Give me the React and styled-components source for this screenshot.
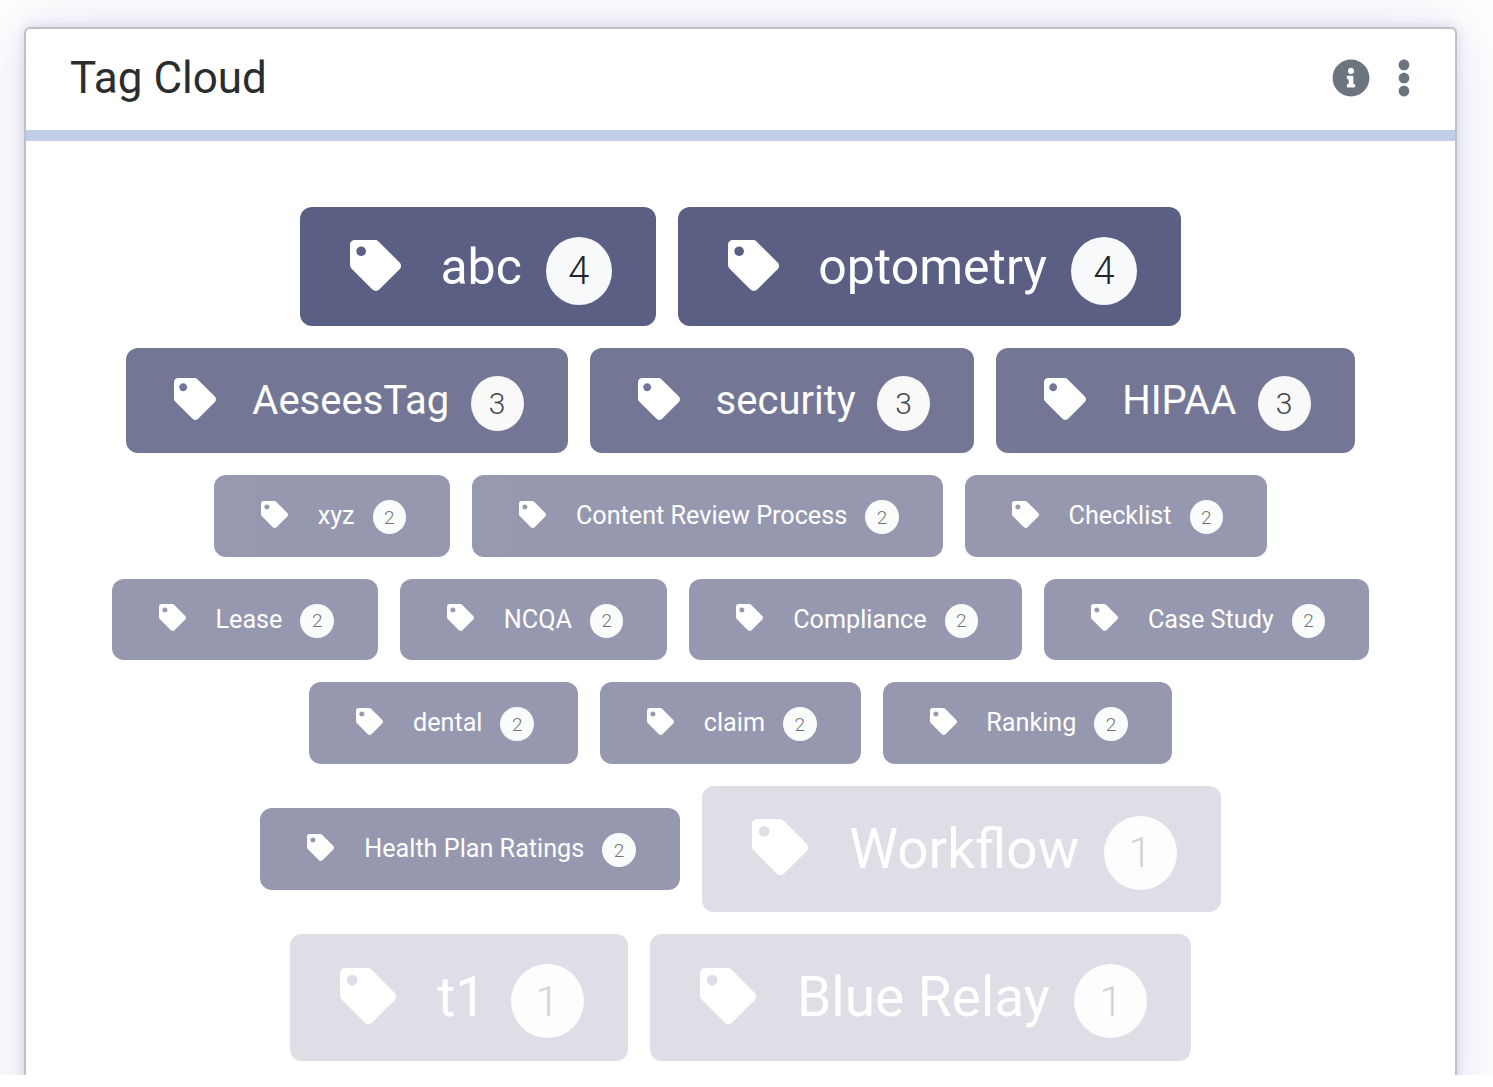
import React from "react";
import styled, { createGlobalStyle } from "styled-components";
import { FaTag, FaInfoCircle, FaEllipsisV } from "react-icons/fa";

const GlobalStyle = createGlobalStyle`
  html, body {
    margin: 0;
    background: #fff;
    font-family: Roboto, "Liberation Sans", sans-serif;
  }
`;

// per-count sizes, read off the reference
const LEVELS = {
  4: { height: 119, font: 50, icon: 51, pl: 50, iconGap: 39.4, badgeGap: 24, badgeW: 66, badgeH: 68, badgeFont: 38, badgeTop: 9, opacity: 1 },
  3: { height: 105, font: 40, icon: 42, pl: 48, iconGap: 36, badgeGap: 21.4, badgeW: 53, badgeH: 55, badgeFont: 30, badgeTop: 6, opacity: 0.85 },
  2: { height: 81.5, font: 25.2, icon: 27, pl: 47, iconGap: 29.8, badgeGap: 18, badgeW: 33.5, badgeH: 34, badgeFont: 19, badgeTop: 3, opacity: 0.64 },
  1: { height: 126.6, font: 55, icon: 56, pl: 50, iconGap: 41.5, badgeGap: 24.5, badgeW: 73, badgeH: 74, badgeFont: 42, badgeTop: 8, opacity: 0.2 },
};

// the screenshot stops at 1075, card and shadow are cut off there
const Page = styled.div`
  height: 1048px;
  padding: 27px 36px 0 24px;
  overflow: hidden;
`;

const Card = styled.section`
  background: #fff;
  border: 2px solid #c0c0c2;
  border-bottom: 0;
  border-radius: 6px 6px 0 0;
  box-shadow: 0 0 12px rgba(80, 90, 170, 0.2), 0 0 60px rgba(80, 90, 170, 0.18);
`;

const Header = styled.header`
  display: flex;
  align-items: center;
  justify-content: space-between;
  height: 97px;
  padding: 0 32px 4px 44px;
  border-bottom: 11px solid #bfcee6;
`;

const Title = styled.h1`
  margin: 0;
  font-size: 44px;
  font-weight: 400;
  color: #2b2c2e;
`;

const Actions = styled.div`
  display: flex;
  align-items: center;
  gap: 15px;
  color: #6c757d;
`;

const Cloud = styled.div`
  display: flex;
  flex-wrap: wrap;
  justify-content: center;
  align-items: center;
  gap: 22px;
  padding: 66px 68px 60px;
`;

const Tag = styled.a`
  display: flex;
  align-items: center;
  height: ${(p) => LEVELS[p.$level].height}px;
  padding: 0 44px 0 ${(p) => LEVELS[p.$level].pl}px;
  box-sizing: border-box;
  border-radius: 12px;
  background: #5c5f84;
  color: #fff;
  font-size: ${(p) => LEVELS[p.$level].font}px;
  opacity: ${(p) => LEVELS[p.$level].opacity};
`;

const TagIcon = styled(FaTag)`
  flex: none;
  width: ${(p) => LEVELS[p.$level].icon}px;
  height: ${(p) => LEVELS[p.$level].icon}px;
  margin-top: -3px;
  margin-right: ${(p) => LEVELS[p.$level].iconGap}px;
`;

const Label = styled.span`
  white-space: nowrap;
`;

const Count = styled.span`
  flex: none;
  display: flex;
  align-items: center;
  justify-content: center;
  width: ${(p) => LEVELS[p.$level].badgeW}px;
  height: ${(p) => LEVELS[p.$level].badgeH}px;
  margin-left: ${(p) => LEVELS[p.$level].badgeGap}px;
  margin-top: ${(p) => LEVELS[p.$level].badgeTop}px;
  border-radius: 50%;
  background: #f8f9fa;
  color: #212529;
  font-size: ${(p) => LEVELS[p.$level].badgeFont}px;
  font-weight: 300;
`;

const TAGS = [
  ["abc", 4],
  ["optometry", 4],
  ["AeseesTag", 3],
  ["security", 3],
  ["HIPAA", 3],
  ["xyz", 2],
  ["Content Review Process", 2],
  ["Checklist", 2],
  ["Lease", 2],
  ["NCQA", 2],
  ["Compliance", 2],
  ["Case Study", 2],
  ["dental", 2],
  ["claim", 2],
  ["Ranking", 2],
  ["Health Plan Ratings", 2],
  ["Workflow", 1],
  ["t1", 1],
  ["Blue Relay", 1],
];

export default function App() {
  return (
    <Page>
      <GlobalStyle />
      <Card>
        <Header>
          <Title>Tag Cloud</Title>
          <Actions>
            <FaInfoCircle size={38} />
            <FaEllipsisV size={38} />
          </Actions>
        </Header>
        <Cloud>
          {TAGS.map(([name, count]) => (
            <Tag key={name} $level={count}>
              <TagIcon $level={count} />
              <Label>{name}</Label>
              <Count $level={count}>{count}</Count>
            </Tag>
          ))}
        </Cloud>
      </Card>
    </Page>
  );
}
